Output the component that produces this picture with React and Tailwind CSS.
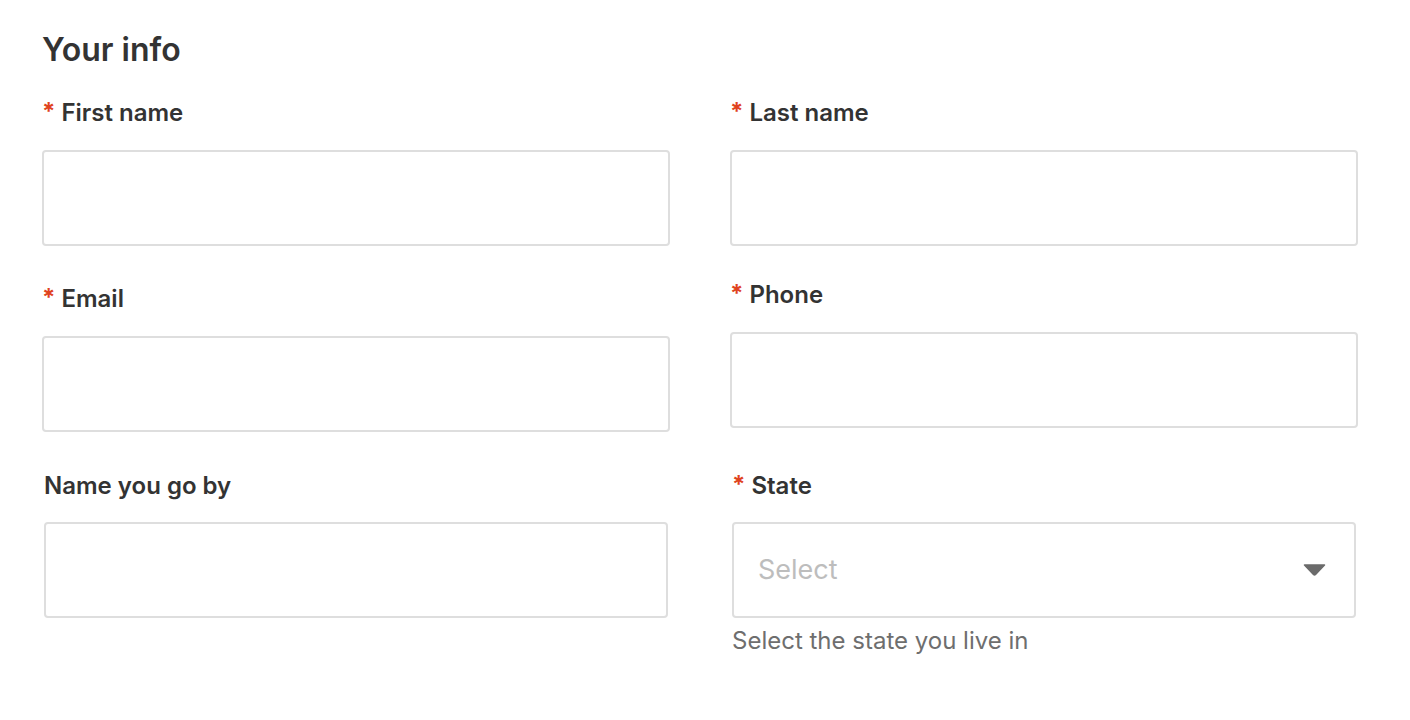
import React from 'react';

const Label = ({ children, required }) => (
  <label className="flex items-start h-[28px] text-[24px] leading-[28px] font-semibold text-[#333]">
    {required && <span className="text-[#e0431e] text-[24px] leading-[26px] font-bold mr-[6px]">*</span>}
    {children}
  </label>
);

const Input = () => (
  <input type="text" className="block w-full h-[96px] border-2 border-[#dedede] rounded-[4px] px-[24px] text-[24px] outline-none bg-white" />
);

const App = () => {
  return (
    <div className="min-h-[720px] bg-white px-[42px] pt-[30px]" style={{ fontFamily: 'Inter, "Noto Sans", sans-serif' }}>
      <h2 className="text-[32px] leading-[40px] font-semibold text-[#333]">Your info</h2>
      <div className="grid grid-cols-[628px_628px] gap-x-[60px] mt-[29px]">
        {/* left column */}
        <div className="flex flex-col">
          <Label required>First name</Label>
          <div className="mt-[23px]"><Input /></div>
          <div className="mt-[39px]"><Label required>Email</Label></div>
          <div className="mt-[23px]"><Input /></div>
          <div className="mt-[40px] px-[2px]">
            <Label>Name you go by</Label>
            <div className="mt-[22px]"><Input /></div>
          </div>
        </div>

        {/* right column */}
        <div className="flex flex-col">
          <Label required>Last name</Label>
          <div className="mt-[23px]"><Input /></div>
          <div className="mt-[35px]"><Label required>Phone</Label></div>
          <div className="mt-[23px]"><Input /></div>
          <div className="mt-[44px] px-[2px]">
            <Label required>State</Label>
            <div className="mt-[22px] relative">
              <div className="flex items-center justify-between h-[96px] border-2 border-[#dedede] rounded-[4px] pl-[24px] pr-[28px]">
                <span className="text-[27px] text-[#bdbdbd]">Select</span>
                <svg width="23" height="12" viewBox="0 0 23 12">
                  <path d="M1.5 1 H21.5 L12.5 10.5 Q11.5 11.5 10.5 10.5 Z" fill="#6b6b6b" stroke="#6b6b6b" strokeWidth="1.5" strokeLinejoin="round" />
                </svg>
              </div>
            </div>
            <p className="mt-[8px] text-[24px] leading-[30px] text-[#6e6e6e]">Select the state you live in</p>
          </div>
        </div>
      </div>
    </div>
  );
};

export default App;
